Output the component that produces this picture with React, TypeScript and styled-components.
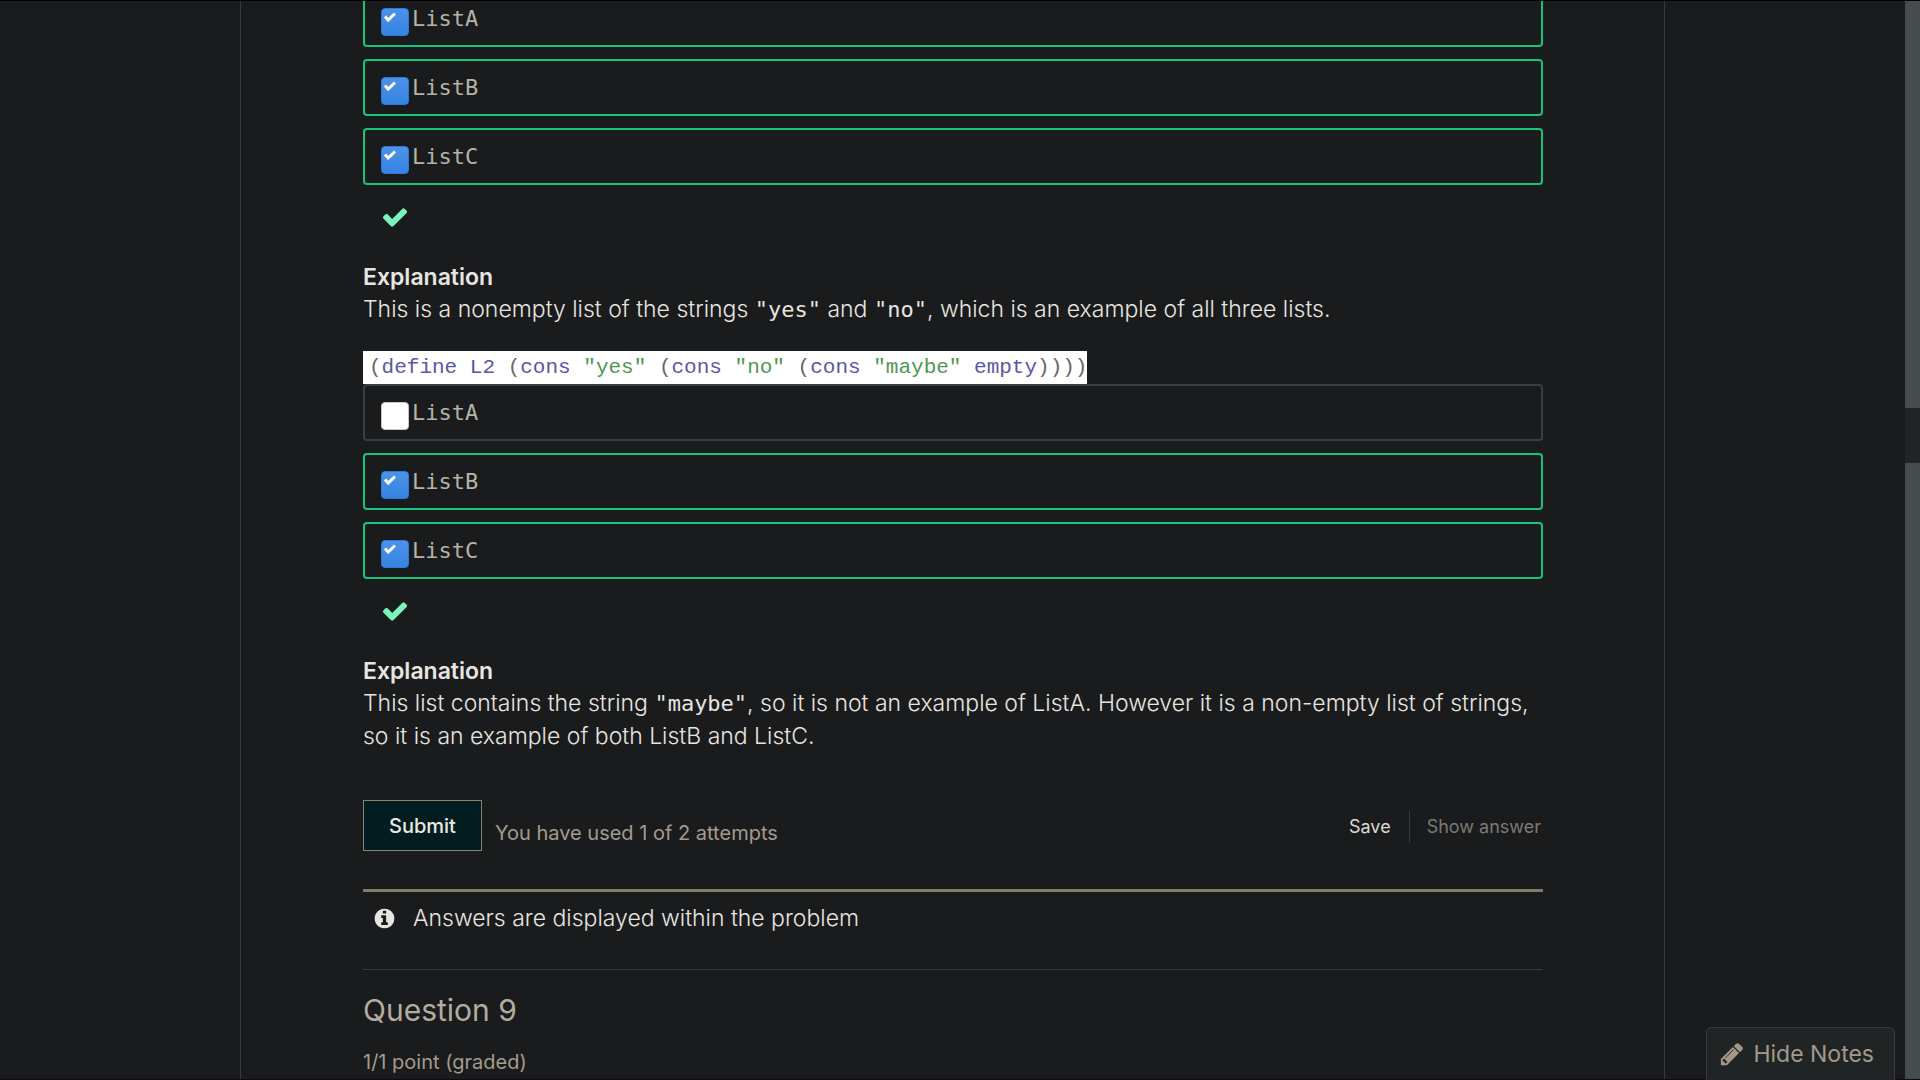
import React, { useState } from "react";
import styled, { createGlobalStyle } from "styled-components";

const sans = `Inter, "Liberation Sans", sans-serif`;
const mono = `"DejaVu Sans Mono", "Liberation Mono", monospace`;

const GlobalStyle = createGlobalStyle`
  * { box-sizing: border-box; }
  html, body, #root { height: 100%; }
  body {
    margin: 0;
    overflow: hidden;
    background: #1a1b1c;
    color: #e8e5e0;
    font-family: ${sans};
    font-size: 23px;
    font-weight: 300;
    line-height: 32px;
  }
`;

const Window = styled.div`
  display: flex;
  height: 100vh;
  border-top: 1px solid #000;
  border-bottom: 1px solid #100c0f;
`;

const Viewport = styled.div`
  flex: 1;
  display: flex;
  justify-content: center;
  overflow: hidden;
`;

const Column = styled.main`
  width: 100%;
  max-width: 1425px;
  border: solid #393c3e;
  border-width: 0 1px;
  padding: 0 121px 0 122px;
`;

const Unit = styled.div`
  margin-top: -11px;
`;

const ScrollTrack = styled.div`
  width: 15px;
  padding-top: 407px;
  background: #464b4d;
`;

const ScrollThumb = styled.div`
  height: 55px;
  background: #202424;
`;

const Choices = styled.fieldset`
  display: flex;
  flex-direction: column;
  gap: 12px;
  margin: 0;
  padding: 0;
  border: 0;
`;

const Choice = styled.label<{ $correct: boolean }>`
  display: flex;
  align-items: flex-start;
  gap: 3px;
  height: 57px;
  padding: 11px 16px;
  border: 2px solid ${(p) => (p.$correct ? "#18c479" : "#3b3e40")};
  border-radius: 4px;
  color: #b8b2a8;
  font-family: ${mono};
  font-size: 22px;
`;

const Tick = styled.span`
  display: grid;
  flex: none;
  margin-top: 5px;

  > * {
    grid-area: 1 / 1;
  }
`;

const TickInput = styled.input`
  appearance: none;
  width: 28px;
  height: 28px;
  margin: 0;
  border: 1px solid #c9c5c0;
  border-radius: 4px;
  background: #fff;

  &:checked {
    border-color: #2f7ad9;
    background: linear-gradient(#4d92e8, #3583e3);
  }
`;

const TickMark = styled.svg`
  width: 14px;
  height: 12px;
  margin: 3px 0 0 2px;
  pointer-events: none;
`;

const Status = styled.div`
  padding: 18px 18px 0;
  height: 76px;
  color: #7bf3bd;

  svg {
    display: block;
  }
`;

const Explanation = styled.section`
  p {
    margin: 0;
  }
  code {
    font-family: ${mono};
    font-size: 22px;
  }
`;

const Heading = styled.h4`
  margin: 0;
  font-size: 23px;
  line-height: 32px;
  font-weight: 600;
`;

const CodeSample = styled.pre`
  width: fit-content;
  margin: 25px 0 0;
  padding: 0 0 0 6px;
  background: #fff;
  color: #666;
  font-family: "Liberation Mono", monospace;
  font-size: 21px;
  line-height: 33px;
`;

const Name = styled.span`
  color: #5a57a6;
`;

const Str = styled.span`
  color: #4f9650;
`;

const Actions = styled.div`
  display: flex;
  align-items: center;
  margin-top: 48px;
`;

const Submit = styled.button`
  height: 51px;
  padding: 0 25px;
  border: 1px solid #8c8272;
  border-radius: 0;
  background: #021d20;
  color: #ebe8e3;
  font: 500 20px/24px ${sans};
`;

const Attempts = styled.span`
  flex: 1;
  padding: 14px 0 0 13px;
  color: #a39b8e;
  font-size: 20px;
  font-weight: 400;
`;

const SideActions = styled.div`
  display: flex;
  padding: 3px 2px 0 0;
`;

const TextButton = styled.button`
  padding: 0;
  border: 0;
  background: none;
  color: #dcd9d4;
  font: 400 18px/32px ${sans};

  & + & {
    margin-left: 18px;
    padding-left: 17px;
    border-left: 1px solid #393c3e;
  }
  &:disabled {
    color: #7c7973;
  }
`;

const Notice = styled.div`
  display: flex;
  align-items: center;
  gap: 17px;
  height: 80px;
  margin-top: 38px;
  padding: 0 10px 25px;
  border-top: 3px solid #857b6b;
`;

const Next = styled.section`
  border-top: 1px solid #393c3e;
`;

const Title = styled.h3`
  margin: 20px 0 0;
  color: #b3aca1;
  font-size: 30px;
  line-height: 40px;
  font-weight: 400;
`;

const Grade = styled.p`
  margin: 16px 0 0;
  color: #a39b8e;
  font-size: 20px;
  font-weight: 400;
`;

const NotesButton = styled.button`
  position: fixed;
  right: 25px;
  bottom: 0;
  display: flex;
  align-items: center;
  gap: 8px;
  height: 53px;
  padding: 0 20px 0 12px;
  border: 1px solid #383c3e;
  border-bottom: 0;
  border-radius: 6px 6px 0 0;
  background: #202424;
  color: #a2998b;
  font: 400 23px/32px ${sans};
`;

const glyphs = {
  check:
    "M1671 566q0 40-28 68l-724 724-136 136q-28 28-68 28t-68-28l-136-136-362-362q-28-28-28-68t28-68l136-136q28-28 68-28t68 28l294 295 656-657q28-28 68-28t68 28l136 136q28 28 28 68z",
  info:
    "M1152 1376v-160q0-14-9-23t-23-9h-96v-512q0-14-9-23t-23-9h-320q-14 0-23 9t-9 23v160q0 14 9 23t23 9h96v320h-96q-14 0-23 9t-9 23v160q0 14 9 23t23 9h448q14 0 23-9t9-23zm-128-896v-160q0-14-9-23t-23-9h-192q-14 0-23 9t-9 23v160q0 14 9 23t23 9h192q14 0 23-9t9-23zm640 416q0 209-103 385.5t-279.5 279.5-385.5 103-385.5-103-279.5-279.5-103-385.5 103-385.5 279.5-279.5 385.5-103 385.5 103 279.5 279.5 103 385.5z",
  pencil:
    "M491 1536l91-91-235-235-91 91v107h128v128h107zm523-928q0-22-22-22-10 0-17 7l-542 542q-7 7-7 17 0 22 22 22 10 0 17-7l542-542q7-7 7-17zm-54-192l416 416-832 832h-416v-416zm683 96q0 53-37 90l-166 166-416-416 166-165q36-38 90-38 53 0 91 38l235 234q37 39 37 91z",
};

function Glyph({ name, size }: { name: keyof typeof glyphs; size: number }) {
  return (
    <svg width={size} height={size} viewBox="0 0 1792 1792" fill="currentColor" aria-hidden="true">
      <path d={glyphs[name]} />
    </svg>
  );
}

function ChoiceGroup({ group, correct }: { group: string; correct: string[] }) {
  const [picked, setPicked] = useState(correct);
  const toggle = (item: string) =>
    setPicked((now) => (now.includes(item) ? now.filter((n) => n !== item) : [...now, item]));

  return (
    <>
      <Choices>
        {["ListA", "ListB", "ListC"].map((item) => (
          <Choice key={item} htmlFor={`${group}-${item}`} $correct={correct.includes(item)}>
            <Tick>
              <TickInput
                type="checkbox"
                id={`${group}-${item}`}
                checked={picked.includes(item)}
                onChange={() => toggle(item)}
              />
              {picked.includes(item) && (
                <TickMark viewBox="0 0 14 12" aria-hidden="true">
                  <path d="M2 5.5L5.2 9L12 2.5" fill="none" stroke="#fff" strokeWidth="3" />
                </TickMark>
              )}
            </Tick>
            {item}
          </Choice>
        ))}
      </Choices>
      <Status>
        <Glyph name="check" size={28} />
      </Status>
    </>
  );
}

export default function App() {
  return (
    <>
      <GlobalStyle />
      <Window>
        <Viewport>
          <Column>
            <Unit>
              <ChoiceGroup group="l1" correct={["ListA", "ListB", "ListC"]} />
              <Explanation>
                <Heading>Explanation</Heading>
                <p>
                  This is a nonempty list of the strings <code>"yes"</code> and <code>"no"</code>, which is an
                  example of all three lists.
                </p>
              </Explanation>
              <CodeSample>
                (<Name>define L2</Name> (<Name>cons</Name> <Str>"yes"</Str> (<Name>cons</Name>{" "}
                <Str>"no"</Str> (<Name>cons</Name> <Str>"maybe"</Str> <Name>empty</Name>))))
              </CodeSample>
              <ChoiceGroup group="l2" correct={["ListB", "ListC"]} />
              <Explanation>
                <Heading>Explanation</Heading>
                <p>
                  This list contains the string <code>"maybe"</code>, so it is not an example of ListA. However it
                  is a non-empty list of strings, so it is an example of both ListB and ListC.
                </p>
              </Explanation>
              <Actions>
                <Submit type="button">Submit</Submit>
                <Attempts>You have used 1 of 2 attempts</Attempts>
                <SideActions>
                  <TextButton type="button">Save</TextButton>
                  <TextButton type="button" disabled>
                    Show answer
                  </TextButton>
                </SideActions>
              </Actions>
              <Notice>
                <Glyph name="info" size={23} />
                <span>Answers are displayed within the problem</span>
              </Notice>
              <Next>
                <Title>Question 9</Title>
                <Grade>1/1 point (graded)</Grade>
              </Next>
            </Unit>
          </Column>
        </Viewport>
        <ScrollTrack>
          <ScrollThumb />
        </ScrollTrack>
      </Window>
      <NotesButton type="button">
        <Glyph name="pencil" size={26} />
        Hide Notes
      </NotesButton>
    </>
  );
}
